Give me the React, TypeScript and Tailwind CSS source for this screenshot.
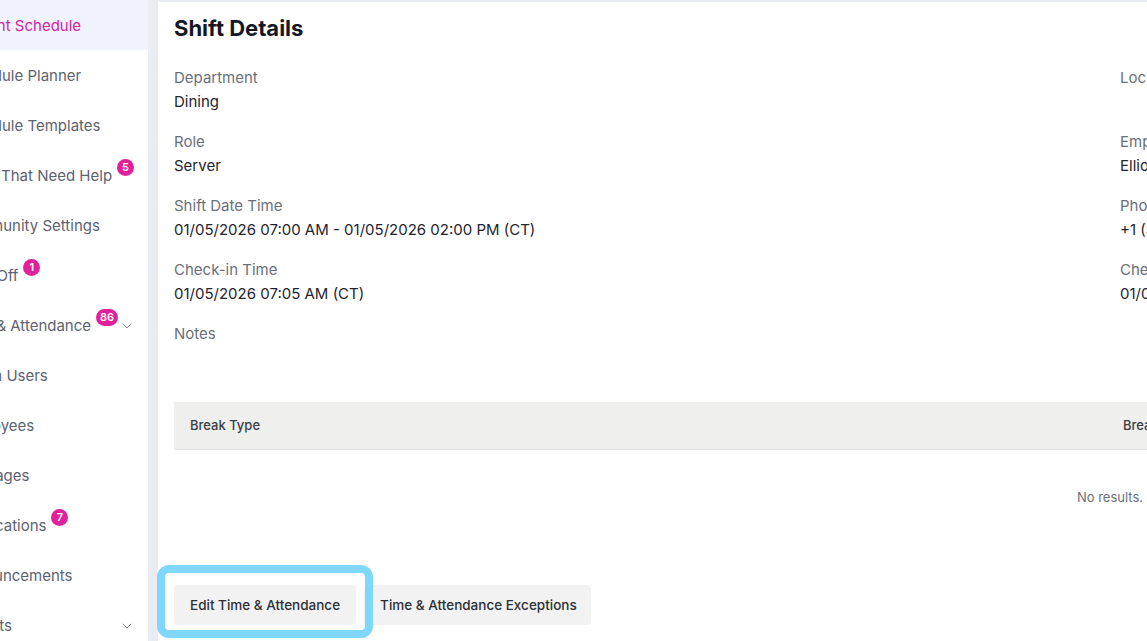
import { ChevronDown } from "lucide-react"

type NavItem = {
  label: string
  badge?: string
  chevron?: boolean
  active?: boolean
}

const navItems: NavItem[] = [
  { label: "Current Schedule", active: true },
  { label: "Schedule Planner" },
  { label: "Schedule Templates" },
  { label: "Shifts That Need Help", badge: "5" },
  { label: "Community Settings" },
  { label: "Time Off", badge: "1" },
  { label: "Time & Attendance", badge: "86", chevron: true },
  { label: "Admin Users" },
  { label: "Employees" },
  { label: "Messages" },
  { label: "Notifications", badge: "7" },
  { label: "Announcements" },
  { label: "Reports", chevron: true },
]

const leftFields = [
  { label: "Department", value: "Dining" },
  { label: "Role", value: "Server" },
  { label: "Shift Date Time", value: "01/05/2026 07:00 AM - 01/05/2026 02:00 PM (CT)" },
  { label: "Check-in Time", value: "01/05/2026 07:05 AM (CT)" },
]

const rightFields = [
  { label: "Location", value: "" },
  { label: "Employee", value: "Elliot Parker" },
  { label: "Phone", value: "+1 (312) 555-0148" },
  { label: "Check-out Time", value: "01/05/2026 02:03 PM (CT)" },
]

const Field = ({ label, value }: { label: string; value: string }) => (
  <div className="mb-4 h-12">
    <p className="h-6 leading-6 text-[15px] text-[#6b6f78] whitespace-nowrap">{label}</p>
    <p className="h-6 leading-6 text-[15px] text-[#1f2430] whitespace-nowrap">{value}</p>
  </div>
)

const Sidebar = () => (
  <aside className="w-[148px] shrink-0 bg-white overflow-hidden">
    {navItems.map((item) => (
      <div
        key={item.label}
        className={`h-[50px] flex items-center relative ${item.active ? "bg-[#f0f2fc]" : ""}`}
      >
        <div className="ml-[-43px] pt-[2px] flex items-center whitespace-nowrap">
          <span
            className={`text-[15px] ${item.active ? "text-[#d1259c]" : "text-[#5d6270]"}`}
          >
            {item.label}
          </span>
          {item.badge && (
            <span className="ml-[5px] relative -top-[9px] min-w-[17px] h-[17px] px-[4px] rounded-full bg-[#e0219b] text-white text-[11px] font-semibold flex items-center justify-center leading-none">
              {item.badge}
            </span>
          )}
        </div>
        {item.chevron && (
          <ChevronDown className="absolute right-[13px] top-[18px] w-4 h-4 text-[#8b8f99]" strokeWidth={1.5} />
        )}
      </div>
    ))}
  </aside>
)

export default function App() {
  return (
    <div
      className="w-[1147px] h-[641px] overflow-hidden flex bg-[#e9ecf0]"
      style={{ fontFamily: "Inter, 'Noto Sans', sans-serif" }}
    >
      <Sidebar />
      <main className="ml-[10px] mt-[2px] w-[1900px] shrink-0 bg-white p-4">
        <h1 className="h-5 leading-5 text-[22px] font-bold text-[#141826] mb-[28px]">Shift Details</h1>

        <div className="flex">
          <div className="w-[946px] shrink-0">
            {leftFields.map((f) => (
              <Field key={f.label} {...f} />
            ))}
            <div className="h-6 leading-6 text-[15px] text-[#6b6f78]">Notes</div>
          </div>
          <div className="w-[926px] shrink-0">
            {rightFields.map((f) => (
              <Field key={f.label} {...f} />
            ))}
          </div>
        </div>

        {/* Breaks table */}
        <div className="mt-[56px] w-[1872px]">
          <div className="h-12 flex items-center bg-[#efefed] border-b border-[#e3e3e1]">
            <div className="w-[933px] px-4 text-[13px] font-medium text-[#3a3d45]">Break Type</div>
            <div className="px-4 text-[13px] font-medium text-[#3a3d45]">Break Start</div>
          </div>
          <div className="h-[96px] flex items-center justify-center text-[13px] text-[#6b6f78]">
            No results.
          </div>
        </div>

        <div className="mt-[39px] flex gap-2">
          <div className="relative">
            <button className="h-10 px-4 rounded bg-[#f2f2f2] text-[13.5px] font-medium text-[#2c2f36]">
              Edit Time &amp; Attendance
            </button>
            <span className="absolute -left-[17px] -right-[17px] -top-[20px] -bottom-[13px] border-[8px] border-[#7fd8fb] rounded-[12px] pointer-events-none" />
          </div>
          <button className="h-10 pl-4 pr-[14px] rounded bg-[#f2f2f2] text-[13.5px] font-medium text-[#2c2f36]">
            Time &amp; Attendance Exceptions
          </button>
        </div>
      </main>
    </div>
  )
}
